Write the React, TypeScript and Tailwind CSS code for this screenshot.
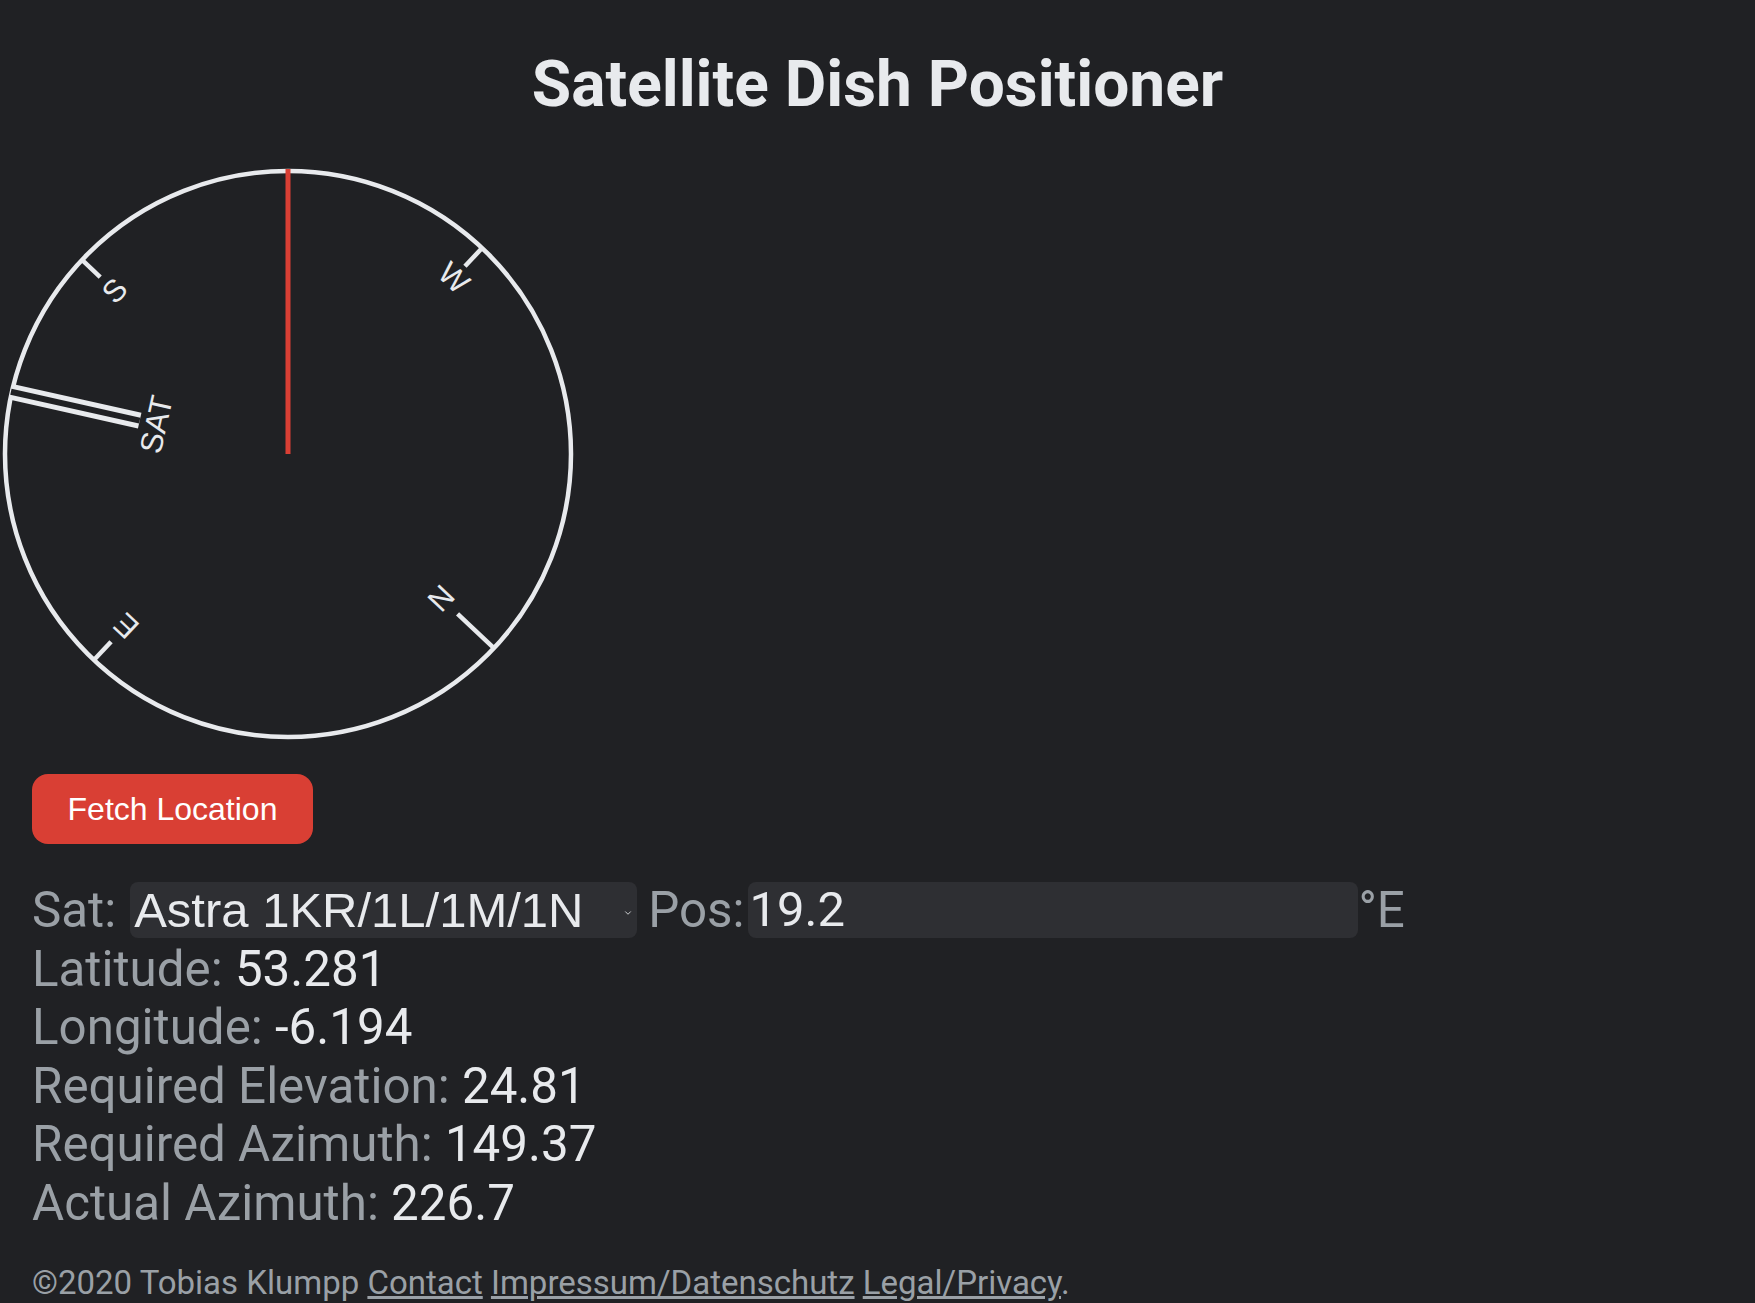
import { ChevronDown } from "lucide-react";

const HEADING = 226.7;
const SAT_AZ = 149.37;
const C = 288;
const R = 283;

function pt(r: number, deg: number) {
  const a = (deg * Math.PI) / 180;
  return { x: C + r * Math.sin(a), y: C - r * Math.cos(a) };
}

function norm(d: number) {
  return ((d % 360) + 360) % 360;
}

const marks = [
  { label: "N", az: 0, tick: 50, text: 210 },
  { label: "E", az: 90, tick: 25, text: 236 },
  { label: "S", az: 180, tick: 25, text: 238 },
  { label: "W", az: 270, tick: 25, text: 242 },
];

function Compass() {
  const satDeg = norm(SAT_AZ - HEADING);
  const s0 = pt(R + 1, satDeg);
  const s1 = pt(152, satDeg);
  const sl = pt(135, satDeg);

  return (
    <svg width={576} height={576} viewBox="0 0 576 576" className="block">
      <circle cx={C} cy={C} r={R} fill="none" stroke="#e8eaed" strokeWidth={4.5} />
      {marks.map((m) => {
        const deg = norm(m.az - HEADING);
        const a = pt(R, deg);
        const b = pt(R - m.tick, deg);
        const t = pt(m.text, deg);
        return (
          <g key={m.label}>
            <line x1={a.x} y1={a.y} x2={b.x} y2={b.y} stroke="#e8eaed" strokeWidth={4.5} />
            <text
              x={t.x}
              y={t.y}
              fill="#e8eaed"
              fontSize={31}
              fontFamily="'Liberation Sans', Arial, sans-serif"
              textAnchor="middle"
              dominantBaseline="central"
              transform={`rotate(${deg} ${t.x} ${t.y})`}
            >
              {m.label}
            </text>
          </g>
        );
      })}
      {/* satellite direction, double line */}
      <line x1={s0.x} y1={s0.y} x2={s1.x} y2={s1.y} stroke="#e8eaed" strokeWidth={16} />
      <line x1={s0.x} y1={s0.y} x2={s1.x} y2={s1.y} stroke="#202124" strokeWidth={6} />
      <text
        x={sl.x}
        y={sl.y}
        fill="#e8eaed"
        fontSize={31}
        fontFamily="'Liberation Sans', Arial, sans-serif"
        textAnchor="middle"
        dominantBaseline="central"
        transform={`rotate(${satDeg} ${sl.x} ${sl.y})`}
      >
        SAT
      </text>
      <line x1={C} y1={C} x2={C} y2={C - R - 2} stroke="#d93f34" strokeWidth={5} />
    </svg>
  );
}

function Row({ label, value }: { label: string; value: string }) {
  return (
    <div>
      {label}: <span className="text-[#e8eaed]">{value}</span>
    </div>
  );
}

export default function App() {
  return (
    <div className="min-h-screen bg-[#202124] font-[Roboto,sans-serif] text-[#9aa0a6]">
      <h1 className="pt-[47px] text-center text-[64px] font-bold leading-[75px] text-[#e8eaed]">
        Satellite Dish Positioner
      </h1>
      <div className="mt-[44px]">
        <Compass />
      </div>
      <div className="px-[32px]">
        <button className="mt-[32px] flex h-[70px] w-[281px] items-center justify-center rounded-[16px] bg-[#d93f34] font-['Liberation_Sans',Arial,sans-serif] text-[32px] text-white">
          Fetch Location
        </button>
        <div className="mt-[37px] text-[49.3px] leading-[58.5px]">
          <div className="flex items-center">
            <span>Sat:</span>
            <div className="relative ml-[14px]">
              <select
                defaultValue="astra"
                className="h-[56px] w-[507px] appearance-none rounded-[8px] bg-[#2e2f33] pl-[4px] font-['Liberation_Sans',Arial,sans-serif] text-[49px] leading-[56px] text-[#e8eaed] outline-none"
              >
                <option value="astra">Astra 1KR/1L/1M/1N</option>
              </select>
              <ChevronDown
                className="pointer-events-none absolute right-[4px] top-[27px] h-[10px] w-[10px] text-[#e8eaed]"
                strokeWidth={2}
              />
            </div>
            <span className="ml-[11px]">Pos:</span>
            <input
              defaultValue="19.2"
              className="ml-[4px] h-[56px] w-[610px] rounded-[8px] bg-[#2e2f33] pl-[1px] font-[Roboto,sans-serif] text-[49px] text-[#e8eaed] outline-none"
            />
            <span>°E</span>
          </div>
          <Row label="Latitude" value="53.281" />
          <Row label="Longitude" value="-6.194" />
          <Row label="Required Elevation" value="24.81" />
          <Row label="Required Azimuth" value="149.37" />
          <Row label="Actual Azimuth" value="226.7" />
        </div>
        <footer className="mt-[32px] text-[33px] leading-[38.5px]">
          ©2020 Tobias Klumpp{" "}
          <a href="#" className="underline">
            Contact
          </a>{" "}
          <a href="#" className="underline">
            Impressum/Datenschutz
          </a>{" "}
          <a href="#" className="underline">
            Legal/Privacy
          </a>
          .
        </footer>
      </div>
    </div>
  );
}
